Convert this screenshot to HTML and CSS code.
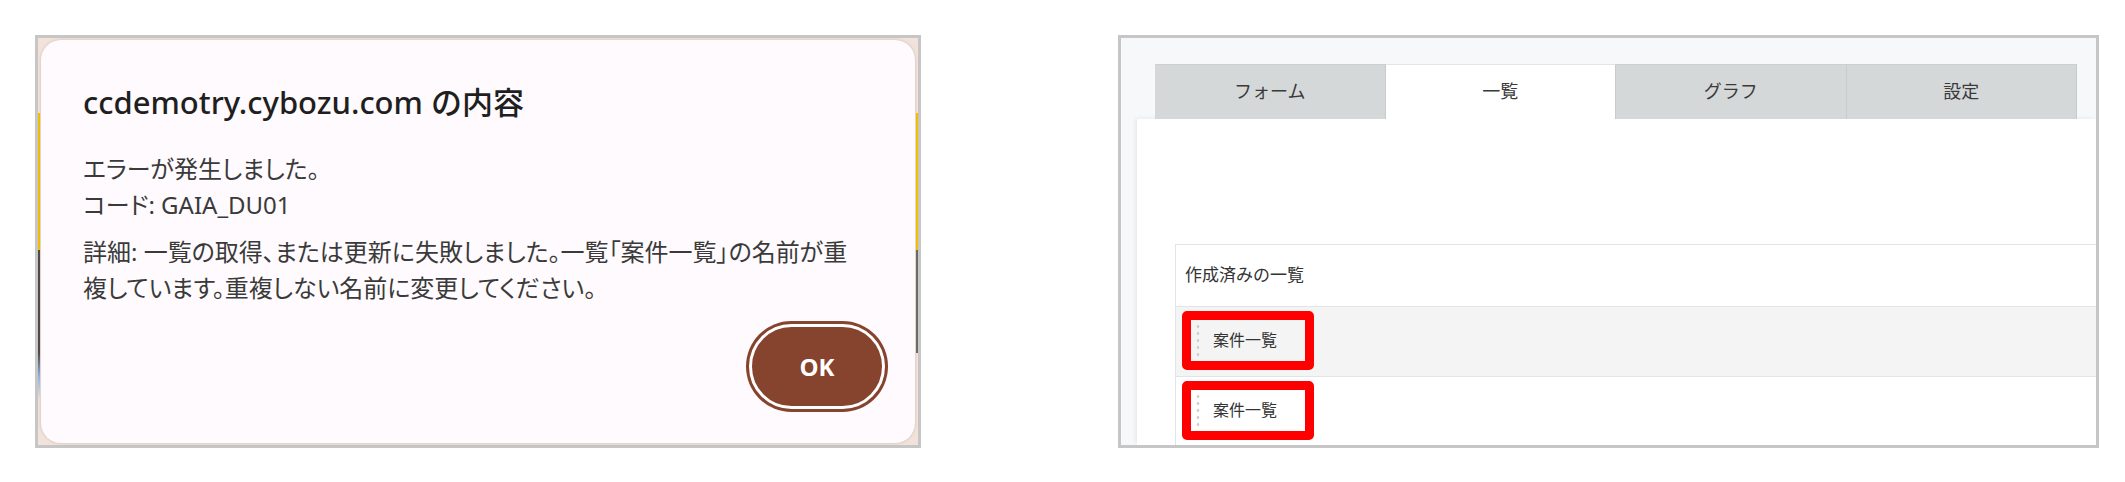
FILE: index.html
```html
<!DOCTYPE html>
<html lang="ja">

<head>
  <meta charset="UTF-8">
  <meta name="viewport" content="width=device-width, initial-scale=1.0">
  <title>一覧の保存エラー</title>
  <link rel="stylesheet" href="styles.css">
</head>

<body>
  <div class="shots">
    <!-- ブラウザのアラート -->
    <div class="shot alert-shot">
      <div class="alert-card">
        <h2 class="alert-title">ccdemotry.cybozu.com の内容</h2>
        <div class="alert-msg">
          <p>エラーが発生しました。</p>
          <p>コード: GAIA_DU01</p>
          <p class="detail">詳細: 一覧の取得、または更新に失敗しました。一覧「案件一覧」の名前が重複しています。重複しない名前に変更してください。</p>
        </div>
        <div class="alert-actions">
          <button class="ok-btn">OK</button>
        </div>
      </div>
    </div>

    <!-- アプリ設定の一覧タブ -->
    <div class="shot app-shot">
      <ul class="tabs">
        <li class="tab">フォーム</li>
        <li class="tab active">一覧</li>
        <li class="tab">グラフ</li>
        <li class="tab">設定</li>
      </ul>
      <div class="tab-body">
        <div class="view-list">
          <div class="view-head">作成済みの一覧</div>
          <div class="view-row alt">
            <div class="view-item marked"><span class="grip"></span>案件一覧</div>
          </div>
          <div class="view-row">
            <div class="view-item marked"><span class="grip"></span>案件一覧</div>
          </div>
        </div>
      </div>
    </div>
  </div>
</body>

</html>
```

FILE: styles.css
```css
body {
  margin: 0;
  background: #fff;
  font-family: "Noto Sans", "Noto Sans CJK JP", sans-serif;
  color: #333;
}

.shots {
  display: flex;
  gap: 197px;
  padding: 35px 0 0 35px;
}

.shot {
  height: 413px;
  box-sizing: border-box;
  border: 3px solid #c6c6c6;
}

/* アラート */
.alert-shot {
  width: 886px;
  padding: 2px 3px;
  background:
    linear-gradient(to bottom, transparent 75px, #f2c300 75px, #f2c300 212px, #4b4b4b 212px, #4b4b4b 315px, #8fb8e4 339px, transparent 362px) left top / 2px 100% no-repeat,
    linear-gradient(to bottom, transparent 75px, #f2c300 75px, #f2c300 212px, #6b6b6b 212px, #6b6b6b 315px, transparent 315px) right top / 2px 100% no-repeat,
    #f1e3db;
}

.alert-card {
  height: 100%;
  box-sizing: border-box;
  display: flex;
  flex-direction: column;
  padding: 44px 30px 34px 42px;
  background: #fefafd;
  border-radius: 20px;
  box-shadow: 0 0 3px rgba(150, 110, 90, 0.35);
}

.alert-title {
  margin: 0;
  font-size: 31px;
  line-height: 36px;
  font-weight: 500;
  color: #1f1f1f;
}

.alert-msg {
  margin-top: 31px;
  font-size: 24px;
  line-height: 36px;
  color: #3a3a3a;
  font-feature-settings: "palt";
}

.alert-msg p {
  margin: 0;
}

.alert-msg .detail {
  margin-top: 11px;
  max-width: 785px;
}

.alert-actions {
  margin-top: auto;
  display: flex;
  justify-content: flex-end;
}

.ok-btn {
  width: 136px;
  height: 85px;
  box-sizing: border-box;
  border: 3px solid #fff;
  border-radius: 43px;
  background: #86432d;
  box-shadow: 0 0 0 3px #86432d;
  color: #fff;
  font-family: "Open Sans", sans-serif;
  font-weight: 700;
  font-size: 24px;
}

/* アプリ設定 */
.app-shot {
  width: 981px;
  padding-top: 26px;
  background: #f7f8f9;
  overflow: hidden;
}

.tabs {
  position: relative;
  z-index: 1;
  display: flex;
  width: 922px;
  margin: 0 0 0 34px;
  padding: 0;
  list-style: none;
}

.tab {
  flex: 1;
  height: 55px;
  line-height: 52px;
  text-align: center;
  font-size: 18px;
  color: #3a3a3a;
  background: #d5d8d9;
  border-top: 1px solid #cdd0d1;
  border-right: 1px solid #c8cbcc;
  box-sizing: border-box;
}

.tab.active {
  background: #fff;
  border-top-color: #e2e4e5;
}

.tab-body {
  height: 326px;
  margin-left: 16px;
  box-sizing: border-box;
  padding: 125px 0 0 38px;
  background: #fff;
  box-shadow: -2px -1px 4px rgba(0, 0, 0, 0.06);
}

.view-list {
  border-top: 1px solid #e2e5e6;
  border-left: 1px solid #e2e5e6;
}

.view-head {
  height: 61px;
  box-sizing: border-box;
  display: flex;
  align-items: center;
  padding: 0 0 4px 9px;
  font-size: 17px;
  color: #333;
}

.view-row {
  height: 70px;
  box-sizing: border-box;
  padding: 4px 0 0 6px;
  border-top: 1px solid #e2e5e6;
}

.view-row.alt {
  background: #f4f4f4;
}

.view-item {
  display: flex;
  align-items: center;
  gap: 13px;
  width: 132px;
  height: 59px;
  box-sizing: border-box;
  padding: 0 0 3px 5px;
  border-radius: 5px;
  font-size: 16px;
  color: #333;
}

.view-item.marked {
  border: 9px solid #ff0000;
}

/* ドラッグ用のつまみ */
.grip {
  width: 4px;
  height: 35px;
  margin-top: 3px;
  background: radial-gradient(circle, #d0d0d0 1.1px, transparent 1.7px) 0 0 / 4px 7px repeat-y;
}
```
